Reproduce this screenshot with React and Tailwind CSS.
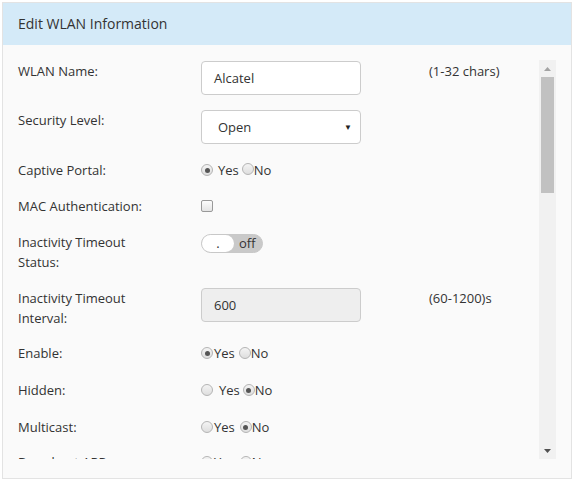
import React from 'react';

const Radio = ({ checked }) => (
  <span className="inline-flex w-[12px] h-[12px] shrink-0 items-center justify-center rounded-full border border-[#b4b4b4] bg-gradient-to-b from-[#f4f4f4] to-[#dedede]">
    {checked && <span className="w-[5px] h-[5px] rounded-full bg-[#555]" />}
  </span>
);

const YesNo = ({ value, yesGap = '', noGap = 'ml-[3px]' }) => (
  <div className="flex items-center">
    <Radio checked={value === 'yes'} />
    <span className={yesGap}>Yes</span>
    <span className={`${noGap} flex items-center`}>
      <Radio checked={value === 'no'} />
    </span>
    <span>No</span>
  </div>
);

const Row = ({ label, children, hint, className = '' }) => (
  <div className={`flex ${className}`}>
    <div className="w-[183px] shrink-0 pr-4">{label}</div>
    <div className="w-[228px] shrink-0">{children}</div>
    {hint && <div className="text-[#333]">{hint}</div>}
  </div>
);

export default function App() {
  return (
    <div className="w-[574px] h-[482px] bg-white p-[2px] font-['Open_Sans',sans-serif] text-[13px] leading-[20px] text-[#333]">
      <div className="h-[477px] border border-[#e3e3e3] bg-[#fafafa] flex flex-col">
        <div className="h-[42px] shrink-0 bg-[#d4eaf8] flex items-center pl-[15px] text-[14px] text-[#333]">
          Edit WLAN Information
        </div>
        <div className="flex flex-1 pt-[15px] overflow-hidden">
          <div className="flex-1 h-[399px] overflow-hidden pl-[15px] pt-px flex flex-col">
            <Row label="WLAN Name:" hint="(1-32 chars)">
              <div className="w-[160px] h-[34px] border border-[#ccc] rounded-[4px] bg-white flex items-center pl-[12px]">Alcatel</div>
            </Row>
            <Row label="Security Level:" className="mt-[15px]">
              <div className="w-[160px] h-[34px] border border-[#ccc] rounded-[4px] bg-white flex items-center pl-[16px] pr-[8px] justify-between">
                <span>Open</span>
                <span className="text-[8px] text-[#222]">▼</span>
              </div>
            </Row>
            <Row label="Captive Portal:" className="mt-[16px]">
              <div className="flex items-center">
                <Radio checked />
                <span className="ml-[5px]">Yes</span>
                <span className="ml-[3px]"><Radio /></span>
                <span>No</span>
              </div>
            </Row>
            <Row label="MAC Authentication:" className="mt-[16px]">
              <div className="h-[20px] flex items-center">
                <span className="w-[12px] h-[12px] rounded-[2px] border border-[#999] bg-gradient-to-b from-[#fcfcfc] to-[#e4e4e4]" />
              </div>
            </Row>
            <Row label={<>Inactivity Timeout<br />Status:</>} className="mt-[16px]">
              <div className="mt-[2px] w-[62px] h-[19px] rounded-full border border-[#c8c8c8] bg-[#c9c9c9] flex items-center">
                <div className="w-[32px] h-[17px] rounded-full bg-white flex items-center justify-center leading-none">.</div>
                <span className="ml-[5px] leading-none">off</span>
              </div>
            </Row>
            <Row label={<>Inactivity Timeout<br />Interval:</>} hint="(60-1200)s" className="mt-[16px]">
              <div className="w-[160px] h-[34px] border border-[#ccc] rounded-[4px] bg-[#eeeeee] flex items-center pl-[12px]">600</div>
            </Row>
            <Row label="Enable:" className="mt-[15px]">
              <YesNo value="yes" yesGap="ml-px" noGap="ml-[4px]" />
            </Row>
            <Row label="Hidden:" className="mt-[17px]">
              <YesNo value="no" yesGap="ml-[6px]" noGap="ml-[3px]" />
            </Row>
            <Row label="Multicast:" className="mt-[17px]">
              <YesNo value="no" yesGap="ml-px" noGap="ml-[5px]" />
            </Row>
            <Row label="Broadcast ARP" className="mt-[15px]">
              <YesNo value="none" yesGap="ml-px" noGap="ml-[5px]" />
            </Row>
          </div>
          <div className="w-[17px] h-[399px] shrink-0 bg-[#f1f1f1] flex flex-col items-center">
            <div className="h-[17px] flex items-center justify-center">
              <svg width="7" height="4" viewBox="0 0 7 4"><path d="M0 4 L3.5 0 L7 4 Z" fill="#a3a3a3" /></svg>
            </div>
            <div className="w-[13px] h-[116px] bg-[#c1c1c1]" />
            <div className="flex-1" />
            <div className="h-[17px] flex items-center justify-center">
              <svg width="7" height="4" viewBox="0 0 7 4"><path d="M0 0 L7 0 L3.5 4 Z" fill="#505050" /></svg>
            </div>
          </div>
          <div className="w-[15px] shrink-0" />
        </div>
      </div>
    </div>
  );
}
